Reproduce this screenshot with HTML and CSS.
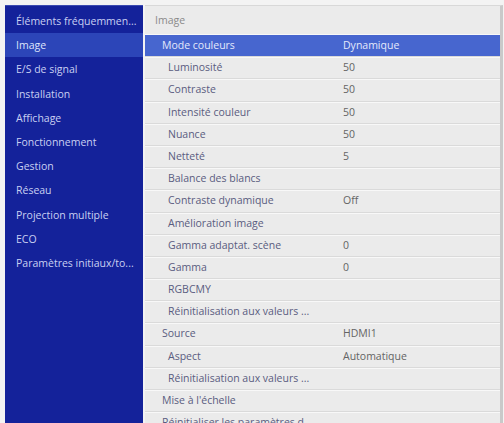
FILE: index.html
```html
<!DOCTYPE html>
<html lang="fr">
<head>
    <meta charset="UTF-8">
    <meta name="viewport" content="width=device-width, initial-scale=1.0">
    <title>Image</title>
    <link rel="stylesheet" href="styles.css">
</head>
<body>
    <div class="menu">
        <div class="tabs">
            <div class="tab">Éléments fréquemmen...</div>
            <div class="tab active">Image</div>
            <div class="tab">E/S de signal</div>
            <div class="tab">Installation</div>
            <div class="tab">Affichage</div>
            <div class="tab">Fonctionnement</div>
            <div class="tab">Gestion</div>
            <div class="tab">Réseau</div>
            <div class="tab">Projection multiple</div>
            <div class="tab">ECO</div>
            <div class="tab">Paramètres initiaux/to...</div>
        </div>
        <div class="settings">
            <div class="title">Image</div>
            <div class="row selected"><div class="label">Mode couleurs</div><div class="value">Dynamique</div></div>
            <div class="row sub"><div class="label">Luminosité</div><div class="value">50</div></div>
            <div class="row sub"><div class="label">Contraste</div><div class="value">50</div></div>
            <div class="row sub"><div class="label">Intensité couleur</div><div class="value">50</div></div>
            <div class="row sub"><div class="label">Nuance</div><div class="value">50</div></div>
            <div class="row sub"><div class="label">Netteté</div><div class="value">5</div></div>
            <div class="row sub"><div class="label">Balance des blancs</div><div class="value"></div></div>
            <div class="row sub"><div class="label">Contraste dynamique</div><div class="value">Off</div></div>
            <div class="row sub"><div class="label">Amélioration image</div><div class="value"></div></div>
            <div class="row sub"><div class="label">Gamma adaptat. scène</div><div class="value">0</div></div>
            <div class="row sub"><div class="label">Gamma</div><div class="value">0</div></div>
            <div class="row sub"><div class="label">RGBCMY</div><div class="value"></div></div>
            <div class="row sub"><div class="label">Réinitialisation aux valeurs ...</div><div class="value"></div></div>
            <div class="row"><div class="label">Source</div><div class="value">HDMI1</div></div>
            <div class="row sub"><div class="label">Aspect</div><div class="value">Automatique</div></div>
            <div class="row sub"><div class="label">Réinitialisation aux valeurs ...</div><div class="value"></div></div>
            <div class="row"><div class="label">Mise à l'échelle</div><div class="value"></div></div>
            <div class="row"><div class="label">Réinitialiser les paramètres d...</div><div class="value"></div></div>
        </div>
    </div>
</body>
</html>
```

FILE: styles.css
```css
body {
    margin: 0;
    padding: 5px 0 0 5px;
    height: 423px;
    box-sizing: border-box;
    overflow: hidden;
    background-color: #f3f3f3;
    font-family: "Open Sans", "Noto Sans", sans-serif;
    font-size: 10.5px;
}
.menu {
    display: flex;
    gap: 2px;
    height: 100%;
}
.tabs {
    width: 138px;
    flex: none;
    padding-top: 3px;
    background-color: #14229a;
    border-top: 1px solid #3a4ab0;
}
.tab {
    height: 24.2px;
    line-height: 24.2px;
    padding-left: 11px;
    color: #c9d0f2;
    white-space: nowrap;
    overflow: hidden;
}
.tab.active {
    background-color: #2c45b8;
    color: #dfe4fb;
}
.settings {
    width: 355px;
    flex: none;
    background-color: #ebebeb;
    border-top: 1px solid #d8d8d8;
    border-right: 3px solid #c9c9c9;
}
.title {
    height: 28px;
    line-height: 28px;
    padding-left: 10px;
    color: #8a8a8a;
    border-bottom: 1px solid #f8f8f8;
}
.row {
    display: flex;
    height: 22.2px;
    line-height: 21px;
    box-sizing: border-box;
    border-bottom: 1px solid #dadada;
    box-shadow: inset 0 1px 0 #f8f8f8;
    color: #5a5c80;
    white-space: nowrap;
}
.label {
    width: 198px;
    flex: none;
    padding-left: 17px;
    box-sizing: border-box;
    overflow: hidden;
}
.row.sub .label {
    padding-left: 23px;
}
.value {
    color: #646464;
}
.row.selected {
    background-color: #4766cf;
    box-shadow: none;
    border-bottom-color: #dadada;
    color: #e4e9fb;
}
.row.selected .value {
    color: #e4e9fb;
}
```
